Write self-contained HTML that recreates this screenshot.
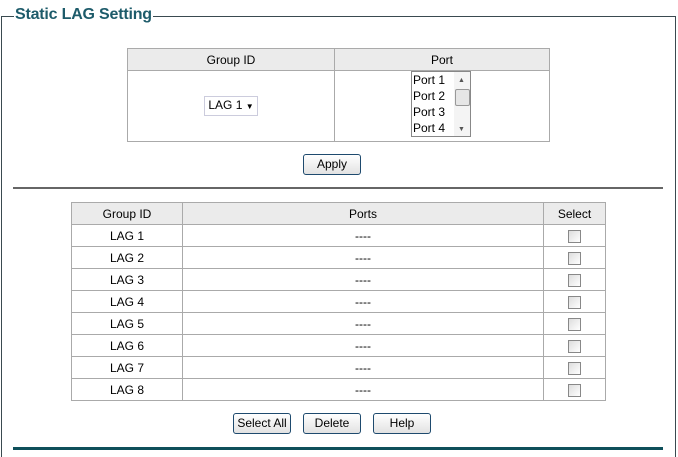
<!DOCTYPE html>
<html><head><style>
body{margin:0;width:678px;height:451px;background:#fff;font-family:"Liberation Sans",Arial,sans-serif;font-size:12px;color:#000;position:relative;overflow:hidden}
.a{position:absolute}
.title{left:14px;top:5px;font-size:16px;font-weight:bold;color:#1d5b6a;background:#fff;padding:0 1px;line-height:20px;letter-spacing:-0.2px}
table{border-collapse:collapse;position:absolute}
td{border:1px solid #aaa;text-align:center;padding:0;height:21px}
th{border:1px solid #aaa;background:#ebebeb;font-weight:normal;height:21px;padding:0}
.btn{position:absolute;border:1px solid #1e4a6e;border-radius:3px;background:linear-gradient(#fff,#e2e2e2);text-align:center;line-height:19px;font-size:12px;box-sizing:border-box;height:21px}
.cb{display:inline-block;width:11px;height:11px;border:1px solid #888;background:linear-gradient(135deg,#ddd,#fff);vertical-align:top;margin-top:1px}
</style></head><body>
<div class="a" style="left:1px;top:16px;width:673px;height:440px;border:1px solid #3a4a50;border-bottom:none"></div>
<div class="a title">Static LAG Setting</div>
<table style="left:127px;top:48px;width:423px">
<tr><th style="width:206px;height:21px">Group ID</th><th>Port</th></tr>
<tr><td style="height:70px"><span style="display:inline-block;border:1px solid #ccd;padding:1px 3px;font-size:12px;line-height:14px">LAG 1 <span style="font-size:8px">▼</span></span></td>
<td style="position:relative"></td></tr>
</table>
<div class="a" style="left:411px;top:71px;width:58px;height:64px;border:1px solid #888;background:#fff;font-size:12px;line-height:16px">
<div style="padding-left:1px">Port 1<br>Port 2<br>Port 3<br>Port 4</div>
<div class="a" style="left:42px;top:0;width:16px;height:64px;background:#f4f4f4"></div>
<div class="a" style="left:46px;top:1px;font-size:7px;color:#555">▲</div>
<div class="a" style="left:43px;top:17px;width:13px;height:15px;border:1px solid #999;border-radius:2px;background:#e6e6e6"></div>
<div class="a" style="left:46px;top:50px;font-size:7px;color:#555">▼</div>
</div>
<div class="btn" style="left:303px;top:154px;width:58px">Apply</div>
<div class="a" style="left:13px;top:187px;width:650px;height:2px;background:#666"></div>
<table style="left:71px;top:202px;width:535px">
<tr><th style="width:110px">Group ID</th><th>Ports</th><th style="width:61px">Select</th></tr>
<tr><td>LAG 1</td><td>----</td><td><span class="cb"></span></td></tr>
<tr><td>LAG 2</td><td>----</td><td><span class="cb"></span></td></tr>
<tr><td>LAG 3</td><td>----</td><td><span class="cb"></span></td></tr>
<tr><td>LAG 4</td><td>----</td><td><span class="cb"></span></td></tr>
<tr><td>LAG 5</td><td>----</td><td><span class="cb"></span></td></tr>
<tr><td>LAG 6</td><td>----</td><td><span class="cb"></span></td></tr>
<tr><td>LAG 7</td><td>----</td><td><span class="cb"></span></td></tr>
<tr><td>LAG 8</td><td>----</td><td><span class="cb"></span></td></tr>
</table>
<div class="btn" style="left:233px;top:413px;width:58px">Select All</div>
<div class="btn" style="left:303px;top:413px;width:58px">Delete</div>
<div class="btn" style="left:373px;top:413px;width:58px">Help</div>
<div class="a" style="left:13px;top:447px;width:650px;height:3px;background:#0e4f5a"></div>
</body></html>
